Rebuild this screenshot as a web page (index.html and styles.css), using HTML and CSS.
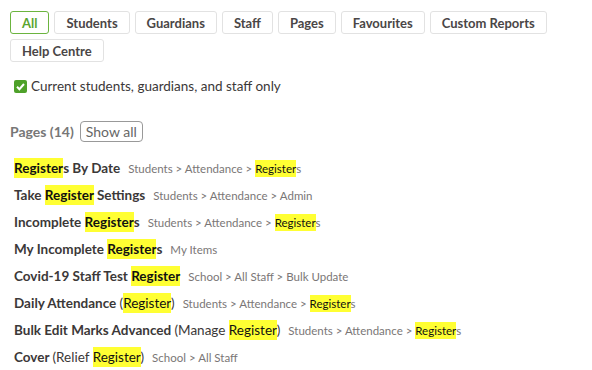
FILE: index.html
```html
<!DOCTYPE html>
<html lang="en">
<head>
    <meta charset="UTF-8">
    <title>Search</title>
    <link rel="stylesheet" href="styles.css">
</head>
<body>
    <div class="search-panel">
        <div class="filter-tabs">
            <button class="tab active">All</button>
            <button class="tab">Students</button>
            <button class="tab">Guardians</button>
            <button class="tab">Staff</button>
            <button class="tab">Pages</button>
            <button class="tab">Favourites</button>
            <button class="tab">Custom Reports</button>
            <button class="tab">Help Centre</button>
        </div>

        <label class="current-only">
            <span class="check-box">
                <svg width="11" height="11" viewBox="0 0 11 11"><path d="M2 5.8 L4.4 8.2 L9 3" fill="none" stroke="#fff" stroke-width="2"/></svg>
            </span>
            Current students, guardians, and staff only
        </label>

        <div class="section-head">
            <span class="section-title">Pages (14)</span>
            <button class="show-all">Show all</button>
        </div>

        <ul class="results">
            <li><span class="title"><mark>Register</mark>s By Date</span><span class="path">Students &gt; Attendance &gt; <mark>Register</mark>s</span></li>
            <li><span class="title">Take <mark>Register</mark> Settings</span><span class="path">Students &gt; Attendance &gt; Admin</span></li>
            <li><span class="title">Incomplete <mark>Register</mark>s</span><span class="path">Students &gt; Attendance &gt; <mark>Register</mark>s</span></li>
            <li><span class="title">My Incomplete <mark>Register</mark>s</span><span class="path">My Items</span></li>
            <li><span class="title">Covid-19 Staff Test <mark>Register</mark></span><span class="path">School &gt; All Staff &gt; Bulk Update</span></li>
            <li><span class="title">Daily Attendance <span class="alt">(<mark>Register</mark>)</span></span><span class="path">Students &gt; Attendance &gt; <mark>Register</mark>s</span></li>
            <li><span class="title">Bulk Edit Marks Advanced <span class="alt">(Manage <mark>Register</mark>)</span></span><span class="path">Students &gt; Attendance &gt; <mark>Register</mark>s</span></li>
            <li><span class="title">Cover <span class="alt">(Relief <mark>Register</mark>)</span></span><span class="path">School &gt; All Staff</span></li>
        </ul>
    </div>
</body>
</html>
```

FILE: styles.css
```css
body {
    margin: 0;
    padding: 0;
    font-family: 'Lato', 'Open Sans', sans-serif;
    background: #fff;
    color: #3b3838;
}

.search-panel {
    padding: 11px 10px;
}

.filter-tabs {
    display: flex;
    flex-wrap: wrap;
    gap: 5px;
}

.tab {
    height: 23px;
    padding: 0 11px;
    border: 1px solid #e2e2e2;
    border-radius: 3px;
    background: #fff;
    color: #4a4646;
    font-family: inherit;
    font-size: 13px;
    font-weight: bold;
}

.tab.active {
    border-color: #6bb43f;
    color: #5aa530;
}

.current-only {
    display: flex;
    align-items: center;
    gap: 4px;
    margin: 16px 0 0 4px;
    font-size: 13.5px;
    color: #3b3838;
}

.check-box {
    display: flex;
    align-items: center;
    justify-content: center;
    width: 13px;
    height: 13px;
    background: #4ea12a;
    border-radius: 2px;
}

.section-head {
    display: flex;
    align-items: center;
    gap: 6px;
    margin-top: 27px;
}

.section-title {
    font-size: 14px;
    font-weight: bold;
    color: #777;
}

.show-all {
    height: 21px;
    padding: 0 5px;
    border: 1px solid #999;
    border-radius: 4px;
    background: #fff;
    color: #666;
    font-family: inherit;
    font-size: 14px;
}

.results {
    list-style: none;
    margin: 13px 0 0 4px;
    padding: 0;
}

.results li {
    display: flex;
    align-items: baseline;
    height: 27px;
    line-height: 27px;
}

.title {
    font-size: 13.5px;
    font-weight: bold;
    color: #3b3838;
    margin-right: 8px;
}

.alt {
    font-weight: normal;
}

.path {
    font-size: 11.5px;
    color: #7a7676;
}

mark {
    background: #ffff33;
    color: #111;
    padding: 2px 0;
}
```
